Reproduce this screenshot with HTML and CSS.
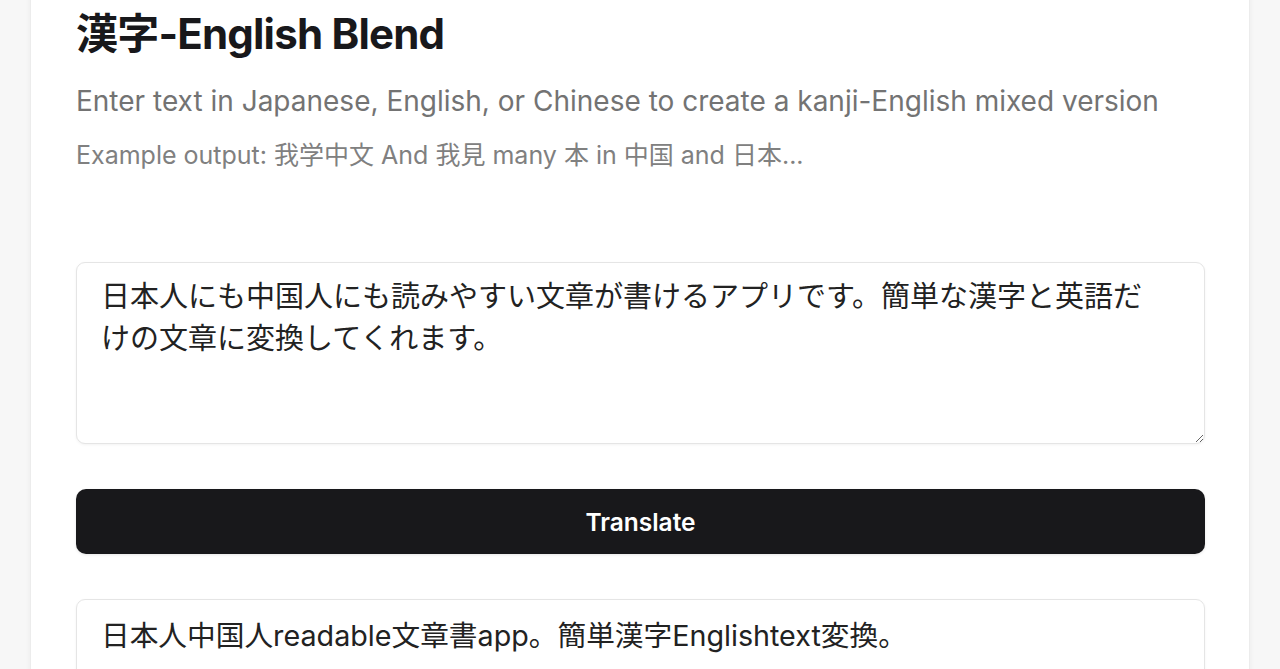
FILE: index.html
```html
<!DOCTYPE html>
<html lang="ja">
<head>
    <meta charset="UTF-8">
    <meta name="viewport" content="width=device-width, initial-scale=1.0">
    <title>漢字-English Blend</title>
    <link rel="stylesheet" href="styles.css">
</head>
<body>
    <div class="card">
        <div class="header">
            <h1>漢字-English Blend</h1>
            <p class="subtitle">Enter text in Japanese, English, or Chinese to create a kanji-English mixed version</p>
            <p class="example">Example output: 我学中文 And 我見 many 本 in 中国 and 日本...</p>
        </div>
        <form class="blend-form" onsubmit="return false;">
            <textarea class="source-input" name="source">日本人にも中国人にも読みやすい文章が書けるアプリです。簡単な漢字と英語だけの文章に変換してくれます。</textarea>
            <button type="submit" class="translate-button">Translate</button>
        </form>
        <div class="result">日本人中国人readable文章書app。簡単漢字Englishtext変換。</div>
    </div>
</body>
</html>
```

FILE: styles.css
```css
body {
    margin: 0;
    font-family: Inter, "Noto Sans CJK JP", sans-serif;
    background-color: #f7f7f7;
    color: #18181b;
}
.card {
    margin: -36px 30px 0;
    padding: 46px 44px 60px 45px;
    background-color: #ffffff;
    border: 1px solid #ececec;
    box-shadow: 0 2px 6px rgba(0, 0, 0, 0.05);
}
.header > h1 {
    margin: 0;
    font-size: 42px;
    line-height: 46px;
    font-weight: 700;
    letter-spacing: -0.8px;
    color: #18181b;
}
.subtitle {
    margin: 25px 0 0;
    font-size: 28px;
    line-height: 38px;
    color: #737373;
}
.example {
    margin: 18px 0 0;
    font-size: 25px;
    line-height: 34px;
    color: #808080;
}
.blend-form {
    display: flex;
    flex-direction: column;
    gap: 45px;
    margin-top: 90px;
}
.source-input {
    display: block;
    width: 100%;
    height: 182px;
    padding: 13px 40px 13px 24px;
    box-sizing: border-box;
    border: 1px solid #e5e5e5;
    border-radius: 9px;
    box-shadow: 0 1px 3px rgba(0, 0, 0, 0.05);
    font-family: inherit;
    font-size: 29px;
    line-height: 42px;
    color: #222;
    resize: vertical;
}
.translate-button {
    height: 65px;
    border: none;
    border-radius: 10px;
    background-color: #18181b;
    color: #ffffff;
    font-family: inherit;
    font-size: 24.5px;
    font-weight: 600;
    cursor: pointer;
    box-shadow: 0 1px 3px rgba(0, 0, 0, 0.1);
}
.result {
    margin-top: 45px;
    min-height: 120px;
    padding: 15px 24px;
    box-sizing: border-box;
    border: 1px solid #e5e5e5;
    border-radius: 9px;
    box-shadow: 0 1px 3px rgba(0, 0, 0, 0.05);
    font-size: 28.7px;
    line-height: 42px;
    color: #222;
}
```
